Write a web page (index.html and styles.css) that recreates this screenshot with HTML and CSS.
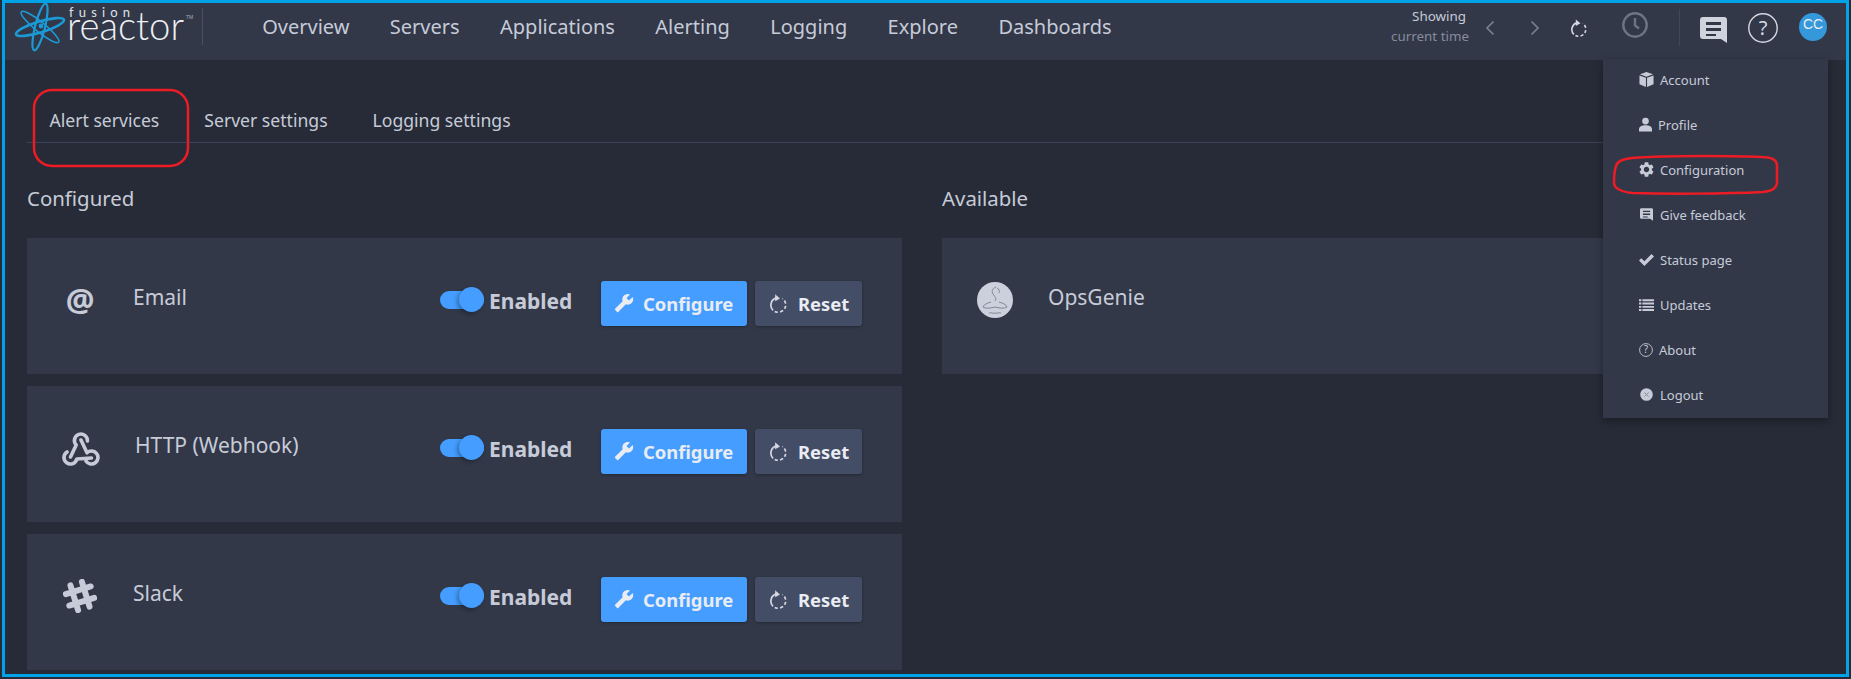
FILE: index.html
```html
<!DOCTYPE html>
<html lang="en">
<head>
<meta charset="utf-8">
<title>FusionReactor - Alert services</title>
<link rel="stylesheet" href="styles.css">
</head>
<body>
<svg class="defs" width="0" height="0" aria-hidden="true">
  <defs>
    <symbol id="i-wrench" viewBox="0 0 24 24"><path transform="matrix(-1 0 0 1 24 0)" d="M22.7 19l-9.1-9.1c.9-2.3.4-5-1.5-6.9-2-2-5-2.4-7.4-1.3L9 6 6 9 1.6 4.7C.4 7.1.9 10.1 2.9 12.1c1.9 1.9 4.6 2.4 6.9 1.5l9.1 9.1c.4.4 1 .4 1.4 0l2.3-2.3c.5-.4.5-1.1.1-1.4z"/></symbol>
    <symbol id="i-cog" viewBox="2 2 20 20"><path d="M19.14 12.94c.04-.3.06-.61.06-.94 0-.32-.02-.64-.07-.94l2.03-1.58c.18-.14.23-.41.12-.61l-1.92-3.32c-.12-.22-.37-.29-.59-.22l-2.39.96c-.5-.38-1.03-.7-1.62-.94l-.36-2.54c-.04-.24-.24-.41-.48-.41h-3.84c-.24 0-.43.17-.47.41l-.36 2.54c-.59.24-1.13.57-1.62.94l-2.39-.96c-.22-.08-.47 0-.59.22L2.74 8.87c-.12.21-.08.47.12.61l2.03 1.58c-.05.3-.09.63-.09.94s.02.64.07.94l-2.03 1.58c-.18.14-.23.41-.12.61l1.92 3.32c.12.22.37.29.59.22l2.39-.96c.5.38 1.03.7 1.62.94l.36 2.54c.05.24.24.41.48.41h3.84c.24 0 .44-.17.47-.41l.36-2.54c.59-.24 1.13-.56 1.62-.94l2.39.96c.22.08.47 0 .59-.22l1.92-3.32c.12-.22.07-.47-.12-.61l-2.01-1.58zM12 15.6c-1.98 0-3.6-1.62-3.6-3.6s1.62-3.6 3.6-3.6 3.6 1.62 3.6 3.6-1.62 3.6-3.6 3.6z"/></symbol>
    <symbol id="i-refresh" viewBox="0 0 18 20"><g fill="none" stroke="currentColor" stroke-width="1.8"><path d="M6.6 4A8 8 0 0 0 3.2 17.2"/><path d="M5 18.4A8 8 0 0 0 13.2 4.7" stroke-dasharray="3.4 2.4"/></g><path d="M5.4 0.3v7.4l5.2-3z" fill="currentColor"/></symbol>
    <symbol id="i-feedback" viewBox="0 0 27 26"><path fill-rule="evenodd" d="M3 0h21a3 3 0 0 1 3 3v23l-6-4H3a3 3 0 0 1-3-3V3a3 3 0 0 1 3-3zM6 5v3h15V5zm0 6v3h15v-3zm0 6v2h10v-2z"/></symbol>
    <symbol id="i-cube" viewBox="0 0 16 16"><path d="M8 0l7 2.4L8 5 1 2.4zM.5 3.6L7.4 6.2V16L.5 13zM15.5 3.6L8.6 6.2V16l6.9-3z"/></symbol>
    <symbol id="i-user" viewBox="0 0 14 15"><circle cx="7" cy="3.8" r="3.6"/><path d="M0 15v-2.4C0 9.8 3 8.4 7 8.4s7 1.4 7 4.2V15z"/></symbol>
    <symbol id="i-check" viewBox="0 0 15 12"><path d="M0 6.6L2.3 4.3 5.4 7.3 12.5 0 15 2.4 5.4 12z"/></symbol>
    <symbol id="i-list" viewBox="0 0 15 12"><path d="M0 .3h2.4v1.9H0zM3.4 .3H15v1.9H3.4zM0 3.6h2.4v1.9H0zM3.4 3.6H15v1.9H3.4zM0 6.9h2.4v1.9H0zM3.4 6.9H15v1.9H3.4zM0 10h2.4v1.9H0zM3.4 10H15v1.9H3.4z"/></symbol>
    <symbol id="i-logout" viewBox="0 0 13 13"><circle cx="6.5" cy="6.5" r="6.3"/><path d="M4.4 4.4l4.2 4.2M8.6 4.4l-4.2 4.2" stroke="#8a8fa0" stroke-width="1"/></symbol>
  </defs>
</svg>

<div class="frame">
  <header class="topbar">
    <svg class="logo" viewBox="5 3 198 57" width="198" height="57" role="img" aria-label="FusionReactor">
      <g fill="none" stroke="#1b9ad6">
        <ellipse cx="40" cy="27" rx="25" ry="5.5" stroke-width="2.6" transform="rotate(-17 40 27)"/>
        <ellipse cx="40" cy="27" rx="24" ry="5" stroke-width="1.6" transform="rotate(39 40 27)"/>
        <ellipse cx="40" cy="27" rx="24" ry="5" stroke-width="2.2" transform="rotate(104 40 27)"/>
      </g>
      <circle cx="41" cy="26" r="2.4" fill="#1b9ad6"/>
      <text class="logo-fusion" x="69" y="17" textLength="61">fusion</text>
      <text class="logo-reactor" x="67" y="40" textLength="117" lengthAdjust="spacingAndGlyphs">reactor</text>
      <text class="logo-tm" x="186" y="19">TM</text>
      <path d="M202.5 8v37" stroke="#4a5062"/>
    </svg>
    <nav class="mainnav">
      <a class="navlink">Overview</a>
      <a class="navlink">Servers</a>
      <a class="navlink">Applications</a>
      <a class="navlink">Alerting</a>
      <a class="navlink">Logging</a>
      <a class="navlink">Explore</a>
      <a class="navlink">Dashboards</a>
    </nav>
    <div class="tools">
      <div class="timebox">
        <span class="time-label">Showing</span>
        <span class="time-value">current time</span>
      </div>
      <svg class="chev chev-prev" viewBox="0 0 10 16" width="10" height="16"><path d="M8.5 1.5L2 8l6.5 6.5" fill="none" stroke="#7c8293" stroke-width="1.6"/></svg>
      <svg class="chev chev-next" viewBox="0 0 10 16" width="10" height="16"><path d="M1.5 1.5L8 8l-6.5 6.5" fill="none" stroke="#7c8293" stroke-width="1.6"/></svg>
      <svg class="tool-refresh" width="16" height="18"><use href="#i-refresh"/></svg>
      <svg class="tool-clock" viewBox="0 0 26 26" width="26" height="26"><circle cx="13" cy="13" r="11.7" fill="none" stroke="#6f7484" stroke-width="2.4"/><path d="M13 6v7.5l4 3" fill="none" stroke="#6f7484" stroke-width="2.4"/></svg>
      <span class="tool-sep"></span>
      <svg class="tool-chat" width="27" height="26"><use href="#i-feedback"/></svg>
      <svg class="tool-help" viewBox="0 0 30 30" width="30" height="30"><circle cx="15" cy="15" r="14.2" fill="none" stroke="#d5d8e2" stroke-width="1.4"/><text class="help-mark" x="15" y="22">?</text></svg>
      <span class="avatar">CC</span>
    </div>
  </header>

  <main class="content">
    <div class="tabs">
      <a class="tab">Alert services</a>
      <a class="tab">Server settings</a>
      <a class="tab">Logging settings</a>
    </div>
    <div class="columns">
      <section class="column">
        <h2 class="heading">Configured</h2>
        <div class="cardlist">
          <article class="card">
            <div class="service">
              <span class="svc-icon svc-at">@</span>
              <span class="svc-name">Email</span>
            </div>
            <div class="controls">
              <div class="enabled"><span class="toggle"><span class="knob"></span></span>Enabled</div>
              <button class="btn btn-primary"><svg class="btn-wrench" width="20" height="20"><use href="#i-wrench"/></svg>Configure</button>
              <button class="btn btn-reset"><svg class="btn-refresh" width="17" height="19"><use href="#i-refresh"/></svg>Reset</button>
            </div>
          </article>
          <article class="card">
            <div class="service">
              <span class="svc-icon svc-icon-webhook">
                <svg viewBox="0 0 38 36" width="38" height="36"><g fill="none" stroke="#c7cbd8" stroke-width="3.6" stroke-linecap="round" stroke-linejoin="round"><path d="M25.4 11A6.5 6.5 0 1 0 14.2 15L8.5 27"/><path d="M5 22A6.5 6.5 0 1 0 14.8 29L29.5 28"/><path d="M24 31A6.5 6.5 0 1 0 25 22.8L19 10"/></g></svg>
              </span>
              <span class="svc-name svc-name-wide">HTTP (Webhook)</span>
            </div>
            <div class="controls">
              <div class="enabled"><span class="toggle"><span class="knob"></span></span>Enabled</div>
              <button class="btn btn-primary"><svg class="btn-wrench" width="20" height="20"><use href="#i-wrench"/></svg>Configure</button>
              <button class="btn btn-reset"><svg class="btn-refresh" width="17" height="19"><use href="#i-refresh"/></svg>Reset</button>
            </div>
          </article>
          <article class="card">
            <div class="service">
              <span class="svc-icon">
                <svg viewBox="0 0 34 34" width="34" height="34"><g fill="none" stroke="#c7cbd8" stroke-width="6" stroke-linecap="round" transform="rotate(-17 17 17)"><path d="M11 4v26M23 4v26M4 11h26M4 23h26"/></g></svg>
              </span>
              <span class="svc-name">Slack</span>
            </div>
            <div class="controls">
              <div class="enabled"><span class="toggle"><span class="knob"></span></span>Enabled</div>
              <button class="btn btn-primary"><svg class="btn-wrench" width="20" height="20"><use href="#i-wrench"/></svg>Configure</button>
              <button class="btn btn-reset"><svg class="btn-refresh" width="17" height="19"><use href="#i-refresh"/></svg>Reset</button>
            </div>
          </article>
        </div>
      </section>
      <section class="column">
        <h2 class="heading">Available</h2>
        <div class="cardlist">
          <article class="card">
            <div class="service">
              <span class="svc-icon">
                <svg viewBox="0 0 36 36" width="36" height="36"><circle cx="18" cy="18" r="18" fill="#ccd0dc"/><g fill="none" stroke="#6d7384" stroke-width=".8"><path d="M19 5c-3 1-5 4-3 7s4 4 2 7"/><path d="M20 6c2 1 3 3 2 5"/><path d="M14 20c-3 1-7 2-8 5 3 2 8 1 12 0 4 1 9 2 12 0-1-3-5-4-8-5"/><path d="M12 31c2-1 4 1 6 0 2 1 4-1 6 0"/></g></svg>
              </span>
              <span class="svc-name">OpsGenie</span>
            </div>
          </article>
        </div>
      </section>
    </div>
  </main>

  <aside class="menu">
    <ul class="menu-list">
      <li class="menu-item"><svg class="menu-icon" width="15" height="15"><use href="#i-cube"/></svg>Account</li>
      <li class="menu-item"><svg class="menu-icon" width="13" height="15"><use href="#i-user"/></svg>Profile</li>
      <li class="menu-item"><svg class="menu-icon" width="15" height="15"><use href="#i-cog"/></svg>Configuration</li>
      <li class="menu-item"><svg class="menu-icon menu-icon-inset" width="13" height="13"><use href="#i-feedback"/></svg>Give feedback</li>
      <li class="menu-item"><svg class="menu-icon" width="15" height="12"><use href="#i-check"/></svg>Status page</li>
      <li class="menu-item"><svg class="menu-icon" width="15" height="12"><use href="#i-list"/></svg>Updates</li>
      <li class="menu-item"><svg class="menu-icon" viewBox="0 0 14 14" width="14" height="14"><circle cx="7" cy="7" r="6.4" fill="none" stroke="currentColor" stroke-width=".9"/><text class="menu-help" x="7" y="10.4">?</text></svg>About</li>
      <li class="menu-item"><svg class="menu-icon menu-icon-inset" width="13" height="13"><use href="#i-logout"/></svg>Logout</li>
    </ul>
  </aside>

  <svg class="annotations" viewBox="5 3 1841 671" width="1841" height="671" aria-hidden="true">
    <rect x="34" y="90" width="154" height="76" rx="18" fill="none" stroke="#ed1c24" stroke-width="2.5"/>
    <path d="M1632 158c40-3 110-2 130-1 10 0 15 3 15 9v16c0 6-4 9-14 10-40 2-100 2-130 1-12-1-19-5-19-10 0-8 1-14 2-17 1-5 7-7 16-8z" fill="none" stroke="#ed1c24" stroke-width="2.5"/>
  </svg>
</div>
</body>
</html>
```
FILE: styles.css
```css
* { box-sizing: border-box; }

html, body {
  margin: 0;
  height: 100%;
  background: #262b37;
  overflow: hidden;
}

body {
  font-family: "Noto Sans", "Open Sans", sans-serif;
  color: #c7cbd8;
}

.defs { position: absolute; }

.frame {
  position: relative;
  width: 1847px;
  height: 677px;
  margin-left: 2px;
  border: 3px solid #00a2e8;
  overflow: hidden;
  background: #262b37;
}

/* top bar */
.topbar {
  display: flex;
  align-items: center;
  height: 57px;
  padding: 0 19px 8px 0;
  background: #323848;
}

.logo { align-self: flex-start; flex: none; overflow: visible; }
.logo-fusion { font: 400 13px "Lato", sans-serif; fill: #dfe2e8; }
.logo-reactor { font: 300 40px "Lato", sans-serif; fill: #eef0f3; }
.logo-tm { font: 400 5px "Liberation Sans", sans-serif; fill: #aab0bd; }

.mainnav { display: flex; margin: 0 0 2px 39px; }

.navlink {
  padding: 0 20.2px;
  font-size: 20px;
  color: #c7cbd8;
}

.tools { display: flex; align-items: center; margin-left: auto; }

.timebox {
  display: flex;
  flex-direction: column;
  align-items: flex-end;
  margin-bottom: 4px;
  font-size: 13.4px;
  line-height: 20px;
}
.time-label { color: #c7cbd8; padding-right: 3px; }
.time-value { color: #868b9c; }

.chev-prev { margin-left: 16px; }
.chev-next { margin-left: 35px; }
.tool-refresh { margin-left: 31px; color: #d5d8e2; }
.tool-clock { margin-left: 35px; margin-bottom: 5px; }
.tool-sep { width: 1px; height: 37px; margin-left: 31px; background: #414757; }
.tool-chat { margin-left: 20px; margin-top: 5px; fill: #d0d3de; }
.tool-help { margin-left: 21px; }
.help-mark { font: 400 20px "Noto Sans", sans-serif; fill: #d5d8e2; text-anchor: middle; }

.avatar {
  width: 28px;
  height: 28px;
  margin: 0 0 2px 21px;
  border-radius: 50%;
  background: #3498db;
  color: #e8eef5;
  font: 400 14px/22px "Liberation Sans", sans-serif;
  text-align: center;
}

/* content */
.content { padding: 0 29px 0 22px; }

.tabs {
  display: flex;
  height: 83px;
  padding-top: 45px;
  border-bottom: 1px solid #3d4356;
}

.tab {
  padding: 0 22.5px;
  font-size: 17.6px;
  line-height: 30px;
  color: #c7cbd8;
}

.columns {
  display: grid;
  grid-template-columns: 875px 875px;
  column-gap: 40px;
}

.heading {
  margin: 0;
  height: 95px;
  padding-top: 40px;
  font-size: 20.4px;
  line-height: 30px;
  font-weight: 400;
  color: #c7cbd8;
}

.cardlist { display: flex; flex-direction: column; gap: 12.5px; }

.card {
  display: flex;
  align-items: flex-start;
  height: 135.5px;
  padding-right: 40px;
  background: #323848;
}

.service {
  display: flex;
  align-items: center;
  flex: 1;
  height: 124px;
  padding-left: 23px;
}

.svc-icon {
  display: flex;
  justify-content: center;
  width: 60px;
  color: #c7cbd8;
}
.svc-icon-webhook { padding-left: 2px; }
.svc-at { font: 700 32px/36px "Noto Sans", sans-serif; }

.svc-name {
  margin: 0 0 7px 23px;
  font-size: 21px;
  color: #c7cbd8;
}
.svc-name-wide { margin-left: 25px; }

.controls {
  display: flex;
  align-items: flex-start;
  padding-top: 43px;
}

.enabled {
  display: flex;
  align-items: center;
  width: 161px;
  margin-top: 2px;
  font-size: 21px;
  font-weight: 700;
  line-height: 36px;
  color: #c7cbd8;
}

.toggle {
  display: block;
  position: relative;
  width: 44px;
  height: 18px;
  margin: -3px 5px 0 0;
  border-radius: 9px;
  background: #449dff;
}

.knob {
  position: absolute;
  top: -3.5px;
  right: 0;
  width: 25px;
  height: 25px;
  border-radius: 50%;
  background: #449dff;
  box-shadow: -2px 2px 4px rgba(0, 0, 0, .3);
}

.btn {
  display: flex;
  align-items: center;
  height: 44.5px;
  padding: 0;
  border: 0;
  border-radius: 3px;
  font-family: inherit;
  font-size: 18.4px;
  font-weight: 700;
  color: #e9ecf2;
  box-shadow: 0 1px 3px rgba(0, 0, 0, .3);
}

.btn-primary { width: 146px; padding-left: 13px; background: #449dff; }
.btn-reset { width: 107px; margin-left: 8px; padding-left: 15px; background: #434d66; }
.btn-wrench { margin-right: 9px; fill: #e9ecf2; }
.btn-refresh { margin-right: 11px; color: #d5d8e2; }

/* dropdown */
.menu {
  position: absolute;
  top: 56px;
  left: 1598px;
  width: 225px;
  height: 359px;
  background: #323848;
  box-shadow: 0 3px 8px rgba(0, 0, 0, .35);
}

.menu-list { list-style: none; margin: -2px 0 0; padding: 0 0 0 36px; }

.menu-item {
  display: flex;
  align-items: center;
  height: 45px;
  font-size: 13px;
  color: #c7cbd8;
}

.menu-icon {
  flex: none;
  margin-right: 6px;
  fill: #c7cbd8;
  color: #c7cbd8;
}
.menu-icon-inset { margin: 0 7px 0 1px; }
.menu-help { font: 400 10px "Noto Sans", sans-serif; text-anchor: middle; fill: #c7cbd8; }

.annotations {
  position: absolute;
  top: 0;
  left: 0;
  pointer-events: none;
}
```
